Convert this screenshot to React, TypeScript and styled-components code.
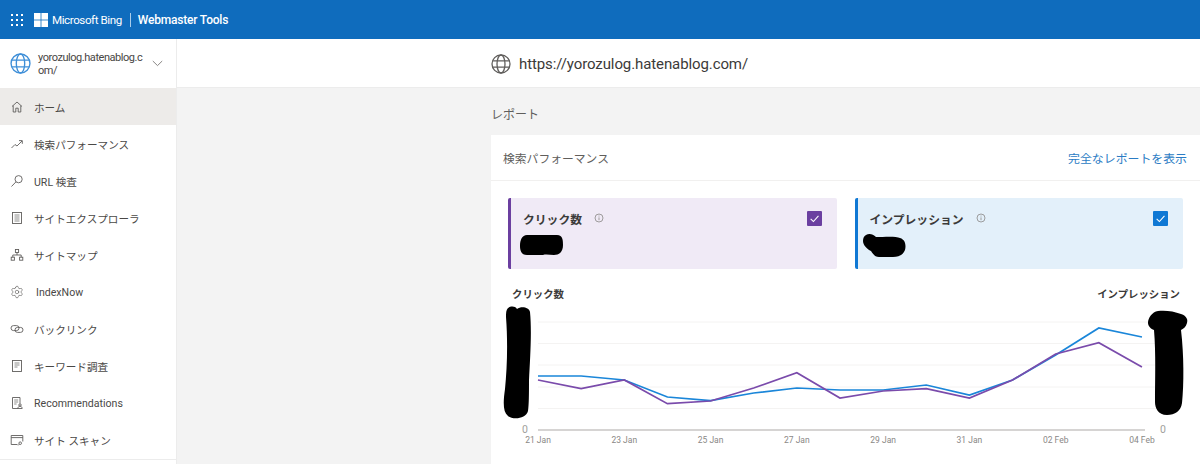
import React from "react";
import styled, { createGlobalStyle } from "styled-components";
import { Settings } from "lucide-react";

const GlobalStyle = createGlobalStyle`
  html, body { margin: 0; padding: 0; background: #f3f3f3; }
  body { font-family: Roboto, "Noto Sans", "Noto Sans CJK JP", sans-serif; color: #323130; }
  * { box-sizing: border-box; }
`;

const Page = styled.div`
  width: 1200px;
  height: 464px;
  overflow: hidden;
  display: flex;
  flex-direction: column;
`;

const TopBar = styled.header`
  height: 39px;
  flex: none;
  background: #0f6cbd;
  color: #fff;
  display: flex;
  align-items: center;
  padding-left: 11px;
`;

const Brand = styled.span<{ $strong?: boolean }>`
  font-size: ${(p) => (p.$strong ? "12px" : "11.6px")};
  font-weight: ${(p) => (p.$strong ? 500 : 400)};
  letter-spacing: ${(p) => (p.$strong ? "-0.2px" : "-0.42px")};
  white-space: nowrap;
`;

const BrandDivider = styled.span`
  width: 1px;
  height: 14px;
  background: #a9cdea;
  margin: 0 7px 0 8px;
`;

const Body = styled.div`
  flex: 1;
  display: flex;
  min-height: 0;
`;

const Sidebar = styled.nav`
  width: 177px;
  flex: none;
  background: #fff;
  border-right: 1px solid #ececec;
  display: flex;
  flex-direction: column;
`;

const SitePicker = styled.div`
  height: 49px;
  flex: none;
  display: flex;
  align-items: center;
  padding-left: 10px;
`;

const SiteName = styled.div`
  width: 108px;
  margin-left: 7px;
  font-size: 11px;
  letter-spacing: -0.45px;
  line-height: 13px;
  word-break: break-all;
  color: #484644;
`;

const Chevron = styled.svg`
  margin-left: 6px;
  flex: none;
`;

const NavRow = styled.div<{ $active?: boolean }>`
  height: 37px;
  flex: none;
  display: flex;
  align-items: center;
  padding-left: 10px;
  gap: 10px;
  background: ${(p) => (p.$active ? "#edebe9" : "transparent")};
  font-size: 10.6px;
  color: #4a4846;
  white-space: nowrap;
`;

const NavLabel = styled.span<{ $offset?: number }>`
  margin-left: ${(p) => p.$offset ?? 0}px;
  padding-top: 1px;
`;

const NavEnd = styled.div`
  margin-top: 1px;
  border-top: 1px solid #ececec;
`;

const Main = styled.main`
  flex: 1;
  min-width: 0;
  display: flex;
  flex-direction: column;
`;

const SiteHeader = styled.div`
  height: 49px;
  flex: none;
  background: #fff;
  border-bottom: 1px solid #ececec;
  display: flex;
  align-items: center;
  gap: 8px;
  padding: 1px 0 0 314px;
  font-size: 15px;
  letter-spacing: -0.1px;
  color: #3b3a39;
`;

const Content = styled.div`
  padding-left: 314px;
`;

const SectionTitle = styled.div`
  height: 47px;
  display: flex;
  align-items: center;
  padding-top: 4px;
  font-size: 12px;
  color: #605e5c;
`;

const Card = styled.section`
  background: #fff;
  height: 340px;
`;

const CardHeader = styled.div`
  height: 46px;
  border-bottom: 1px solid #f1f0ef;
  display: flex;
  align-items: center;
  justify-content: space-between;
  padding: 0 13px 0 12px;
  font-size: 11.8px;
  color: #605e5c;
`;

const ReportLink = styled.a`
  color: #2b7cc4;
  font-size: 11.9px;
`;

const Tiles = styled.div`
  display: flex;
  gap: 18px;
  padding: 17px 17px 0;
`;

const Tile = styled.div<{ $accent: string; $bg: string }>`
  flex: 1;
  height: 71px;
  background: ${(p) => p.$bg};
  border-left: 3px solid ${(p) => p.$accent};
  border-radius: 2px;
  padding: 10px 15px 0 12px;
`;

const TileTop = styled.div`
  display: flex;
  align-items: center;
  height: 20px;
`;

const TileName = styled.span`
  font-size: 11.8px;
  font-weight: 700;
  color: #3b3a39;
  margin-right: 12px;
`;

const Check = styled.span<{ $color: string }>`
  margin-left: auto;
  width: 15px;
  height: 15px;
  border-radius: 1px;
  background: ${(p) => p.$color};
  display: flex;
  align-items: center;
  justify-content: center;
`;

const TileBlob = styled.svg<{ $shift: number }>`
  display: block;
  margin: 5px 0 0 ${(p) => p.$shift}px;
`;

const AxisTitles = styled.div`
  display: flex;
  justify-content: space-between;
  padding: 18px 20px 0 21px;
  font-size: 10.4px;
  font-weight: 700;
  line-height: 15px;
  color: #3b3a39;
`;

const ChartSvg = styled.svg`
  display: block;
  margin-top: 3px;
`;

const AxisLabel = styled.text`
  font-size: 8.5px;
  fill: #8a8886;
  text-anchor: middle;
`;

const ZeroLabel = styled.text`
  font-size: 10.5px;
  fill: #a19f9d;
  text-anchor: middle;
`;

const Icon = ({ children }: { children: React.ReactNode }) => (
  <svg width="14" height="14" viewBox="0 0 14 14" fill="none" stroke="#605e5c" strokeWidth="0.9" style={{ flex: "none" }}>
    {children}
  </svg>
);

const navItems: { label: string; active?: boolean; offset?: number; icon: React.ReactNode }[] = [
  {
    label: "ホーム",
    active: true,
    icon: <path d="M2 6.5 7 2l5 4.5M3.2 5.6V12h2.6V8.2h2.4V12h2.6V5.6" />,
  },
  {
    label: "検索パフォーマンス",
    icon: <path d="M1.5 11 5 7.5l2 1.5 5-5M9 3.6h3.3v3.2" />,
  },
  {
    label: "URL 検査",
    icon: (
      <>
        <circle cx="8.6" cy="5.2" r="3.6" />
        <path d="M6 7.8 1.5 12.5" />
      </>
    ),
  },
  {
    label: "サイトエクスプローラ",
    icon: (
      <>
        <rect x="2.5" y="1.5" width="9" height="11" />
        <path d="M4.5 4h5M4.5 6h5M4.5 8h5M4.5 10h5" strokeWidth="0.7" />
      </>
    ),
  },
  {
    label: "サイトマップ",
    icon: (
      <>
        <rect x="5.4" y="1.5" width="3.2" height="3" />
        <rect x="1.2" y="9.2" width="3.2" height="3" />
        <rect x="9.6" y="9.2" width="3.2" height="3" />
        <path d="M7 4.5V7M2.8 9.2V7h8.4v2.2" />
      </>
    ),
  },
  {
    label: "IndexNow",
    offset: 2,
    icon: <Settings size={14} strokeWidth={1.1} color="#605e5c" />,
  },
  {
    label: "バックリンク",
    icon: (
      <>
        <rect x="1" y="3.6" width="8" height="5" rx="2.5" />
        <rect x="5" y="5.4" width="8" height="5" rx="2.5" />
      </>
    ),
  },
  {
    label: "キーワード調査",
    icon: (
      <>
        <rect x="2.5" y="1.5" width="9" height="11" />
        <path d="M4.5 4h5M4.5 6h5M4.5 8h3" strokeWidth="0.7" />
      </>
    ),
  },
  {
    label: "Recommendations",
    icon: (
      <>
        <path d="M8 12.5H2.5v-11h7.5v6" />
        <path d="M4.2 4h4M4.2 6h4M4.2 8h2.4" strokeWidth="0.7" />
        <circle cx="10" cy="9" r="1.2" />
        <path d="M7.8 12.5c.2-1.6 1-2.2 2.2-2.2s2 .6 2.2 2.2z" />
      </>
    ),
  },
  {
    label: "サイト スキャン",
    icon: (
      <>
        <path d="M7.5 11.5H1.2V2.5h11.6v6" />
        <path d="M1.2 4.6h11.6" />
        <circle cx="10.2" cy="10.2" r="1.3" />
        <path d="M9.2 11.2 8.2 12.4" />
      </>
    ),
  },
];

const Globe = ({ size, color }: { size: number; color: string }) => (
  <svg width={size} height={size} viewBox="0 0 20 20" fill="none" stroke={color} strokeWidth="1.3" style={{ flex: "none" }}>
    <circle cx="10" cy="10" r="9" />
    <ellipse cx="10" cy="10" rx="4" ry="9" />
    <path d="M1.8 6.8h16.4M1.8 13.2h16.4" />
  </svg>
);

const Info = () => (
  <svg width="10" height="10" viewBox="0 0 10 10" fill="none" stroke="#8a8886" strokeWidth="0.8">
    <circle cx="5" cy="5" r="4" />
    <path d="M5 4.4v2.8M5 2.6v.9" />
  </svg>
);

const Tick = () => (
  <svg width="11" height="11" viewBox="0 0 10 10" fill="none" stroke="#fff" strokeWidth="1">
    <path d="M1.5 5.4 4 7.8 8.6 2.6" />
  </svg>
);

// 0 = 21 Jan ... 14 = 04 Feb, y is chart pixel from the top of the page
const blue = [376, 376, 380, 397, 400.7, 393, 388, 390, 390, 385, 395, 380, 355, 328, 337];
const purple = [380, 388.7, 380, 403.7, 401, 388, 372.7, 398, 391, 388.7, 398, 380, 354, 342.7, 367];
const ticks = ["21 Jan", "23 Jan", "25 Jan", "27 Jan", "29 Jan", "31 Jan", "02 Feb", "04 Feb"];
const gridY = [322, 343.5, 365, 387, 408.5];

const CHART_TOP = 305;
const xAt = (i: number) => 47 + i * 43.14;
const toPoints = (values: number[]) => values.map((v, i) => `${xAt(i)},${v - CHART_TOP}`).join(" ");

function Chart() {
  return (
    <ChartSvg width="709" height="150" viewBox="0 0 709 150" fill="none">
      {gridY.map((y) => (
        <line key={y} x1="47" x2="670" y1={y - CHART_TOP} y2={y - CHART_TOP} stroke="#f4f3f2" />
      ))}
      <line x1="47" x2="654" y1="125" y2="125" stroke="#c8c6c4" strokeWidth="1.6" />
      <polyline points={toPoints(blue)} stroke="#1a86d9" strokeWidth="1.7" />
      <polyline points={toPoints(purple)} stroke="#7a4bab" strokeWidth="1.7" />
      {ticks.map((t, i) => (
        <AxisLabel key={t} x={xAt(i * 2)} y="138">
          {t}
        </AxisLabel>
      ))}
      <ZeroLabel x="34" y="128">0</ZeroLabel>
      <ZeroLabel x="672" y="128">0</ZeroLabel>
      {/* 黒塗り */}
      <path
        d="M17 3c3-2 7-2 9 1 4-3 12-2 13 3 2 20 0 48-1 68 0 12 0 25-1 31-2 8-15 9-20 5-5-4-5-13-3-27 2-20 3-46 1-72 0-4 0-7 2-9z"
        fill="#000"
      />
      <path
        d="M667 6c6-1 16 0 23 3 6 2 7 6 6 9-1 4-4 6-6 7 3 25 3 55 1 73-1 8-7 12-15 12-9 0-12-7-12-13 0-22 1-48-1-72-3-1-6-4-6-7 0-5 4-11 10-12z"
        fill="#000"
      />
    </ChartSvg>
  );
}

export default function App() {
  return (
    <Page>
      <GlobalStyle />
      <TopBar>
        <svg width="12" height="12" viewBox="0 0 12 12" fill="#fff" style={{ marginRight: 11 }}>
          {[1, 6, 11].map((y) =>
            [1, 6, 11].map((x) => <rect key={`${x}-${y}`} x={x - 1} y={y - 1} width="2" height="2" />)
          )}
        </svg>
        <svg width="14" height="14" viewBox="0 0 14 14" fill="#fff" style={{ marginRight: 4 }}>
          <rect width="6.6" height="6.6" />
          <rect x="7.4" width="6.6" height="6.6" />
          <rect y="7.4" width="6.6" height="6.6" />
          <rect x="7.4" y="7.4" width="6.6" height="6.6" />
        </svg>
        <Brand>Microsoft Bing</Brand>
        <BrandDivider />
        <Brand $strong>Webmaster Tools</Brand>
      </TopBar>
      <Body>
        <Sidebar>
          <SitePicker>
            <Globe size={21} color="#3f8fd8" />
            <SiteName>yorozulog.hatenablog.com/</SiteName>
            <Chevron width="11" height="7" viewBox="0 0 11 7" fill="none" stroke="#7a7876" strokeWidth="0.9">
              <path d="M.8 1 5.5 5.6 10.2 1" />
            </Chevron>
          </SitePicker>
          {navItems.map((item) => (
            <NavRow key={item.label} $active={item.active}>
              <Icon>{item.icon}</Icon>
              <NavLabel $offset={item.offset}>{item.label}</NavLabel>
            </NavRow>
          ))}
          <NavEnd />
        </Sidebar>
        <Main>
          <SiteHeader>
            <Globe size={20} color="#605e5c" />
            https://yorozulog.hatenablog.com/
          </SiteHeader>
          <Content>
            <SectionTitle>レポート</SectionTitle>
            <Card>
              <CardHeader>
                検索パフォーマンス
                <ReportLink>完全なレポートを表示</ReportLink>
              </CardHeader>
              <Tiles>
                <Tile $accent="#6b3fa0" $bg="#f0eaf6">
                  <TileTop>
                    <TileName>クリック数</TileName>
                    <Info />
                    <Check $color="#6b3fa0">
                      <Tick />
                    </Check>
                  </TileTop>
                  <TileBlob $shift={-4} width="46" height="24" viewBox="0 0 46 24">
                    <path d="M8 2h30c6 0 6 6 6 10 0 7-4 10-9 10-4 0-8-1-11 0H8c-6 0-7-5-7-9 0-6 2-11 7-11z" fill="#000" />
                  </TileBlob>
                </Tile>
                <Tile $accent="#0f78d4" $bg="#e3f0fa">
                  <TileTop>
                    <TileName>インプレッション</TileName>
                    <Info />
                    <Check $color="#0f78d4">
                      <Tick />
                    </Check>
                  </TileTop>
                  <TileBlob $shift={-8} width="46" height="26" viewBox="0 0 46 26">
                    <path d="M4 2c3-2 7-1 10 2 8 0 20-1 24 1 6 2 6 8 5 12-2 5-6 7-12 7H17c-4 0-6-3-8-6-4-2-8-6-8-10 0-3 1-5 3-6z" fill="#000" />
                  </TileBlob>
                </Tile>
              </Tiles>
              <AxisTitles>
                <span>クリック数</span>
                <span>インプレッション</span>
              </AxisTitles>
              <Chart />
            </Card>
          </Content>
        </Main>
      </Body>
    </Page>
  );
}
